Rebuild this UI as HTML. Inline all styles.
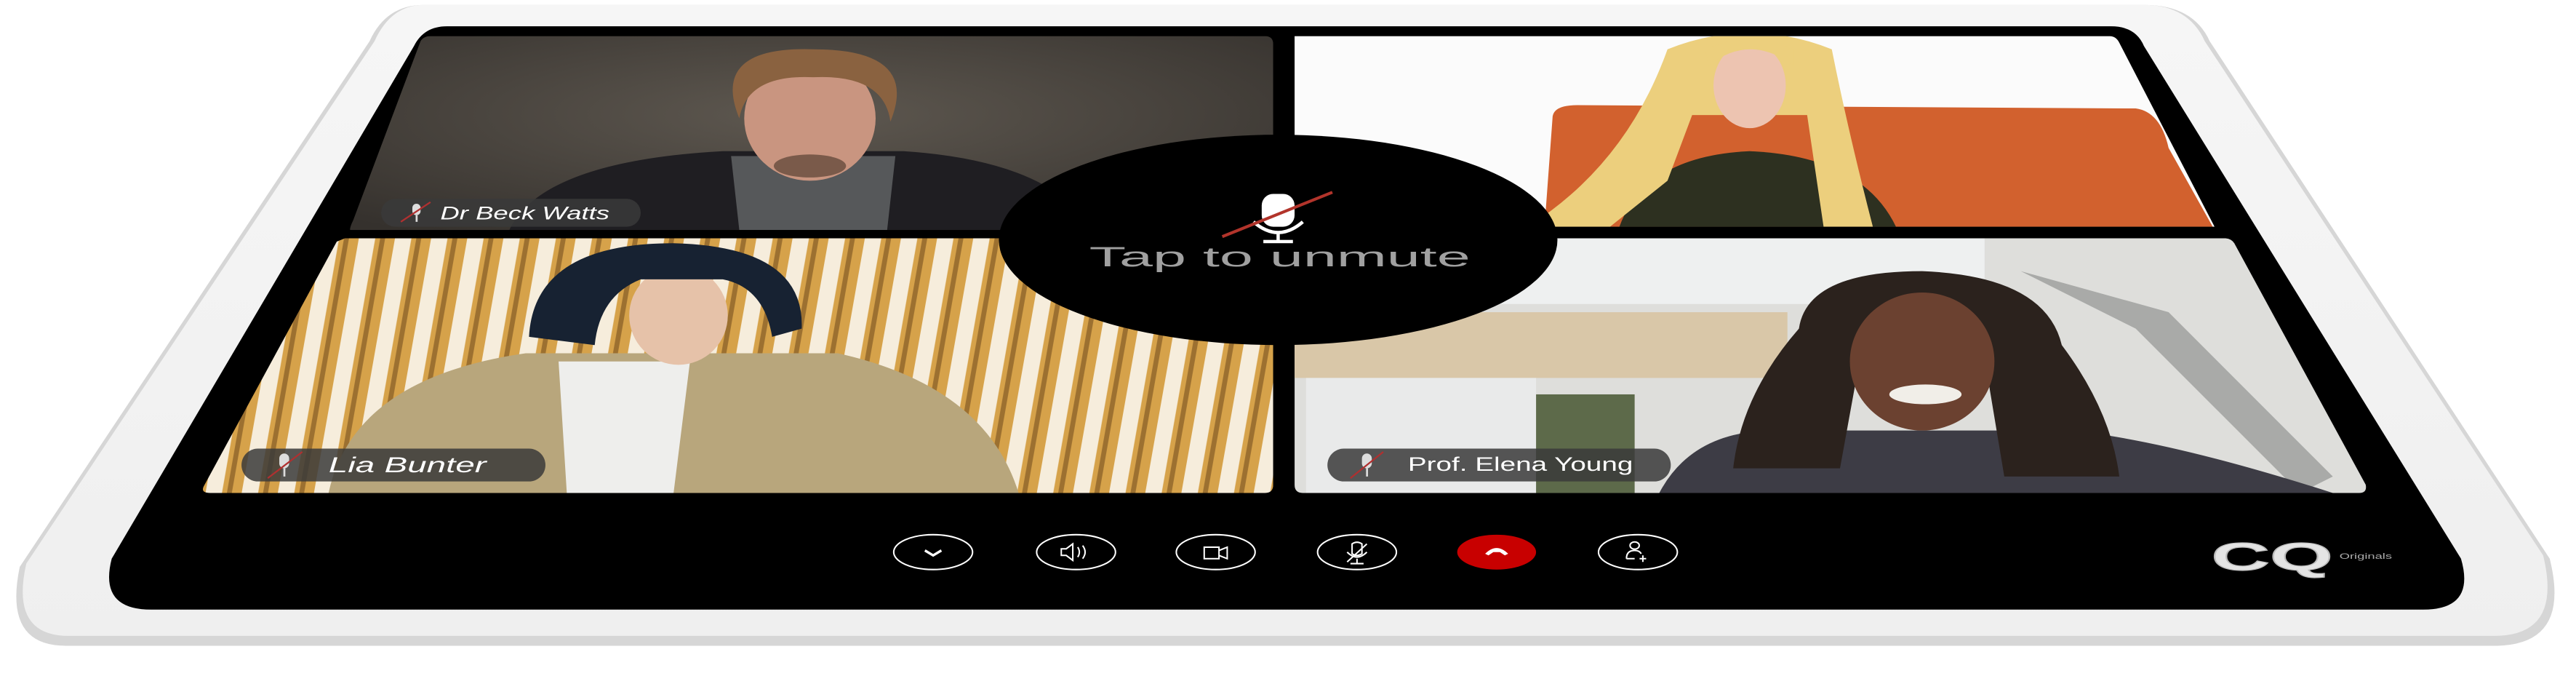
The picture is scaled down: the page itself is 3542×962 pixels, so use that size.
<!DOCTYPE html>
<html><head><meta charset="utf-8"><style>html,body{margin:0;padding:0;background:#fff;overflow:hidden}svg{display:block}</style></head>
<body>
<svg width="3542" height="962" viewBox="0 0 1568 426" preserveAspectRatio="none" xmlns="http://www.w3.org/2000/svg" font-family="Liberation Sans, sans-serif">
<defs>
<clipPath id="tl"><path d="M262,22 L770,22 Q775,22 775,27 L775,140 L213,140 Q213,138 215,134 L256,25 Q258,22 262,22Z"/></clipPath>
<clipPath id="tr"><path d="M788,22 L1284,22 Q1288,22 1290,26 L1348,138 L788,138Z"/></clipPath>
<clipPath id="bl"><path d="M210,145 L775,145 L775,295 Q775,300 770,300 L128,300 Q122,300 124,296 L205,147Z"/></clipPath>
<clipPath id="br"><path d="M788,145 L1354,145 Q1358,145 1360,148 L1440,295 Q1441,300 1436,300 L793,300 Q788,300 788,295Z"/></clipPath>
<pattern id="slats" width="22" height="200" patternUnits="userSpaceOnUse" patternTransform="skewX(-10)">
<rect width="22" height="200" fill="#d6a24a"/><rect x="2" width="10" height="200" fill="#f6eddc"/><rect x="15" width="3" height="200" fill="#9c7030"/>
</pattern>
<radialGradient id="tlbg" cx="0.5" cy="0.4" r="0.7"><stop offset="0" stop-color="#5e5850"/><stop offset="1" stop-color="#35312d"/></radialGradient>
<linearGradient id="frameSh" x1="0" y1="0" x2="0" y2="1"><stop offset="0" stop-color="#f6f6f6"/><stop offset="1" stop-color="#efefef"/></linearGradient>
</defs>
<path d="M258,3 L1305,3 Q1335,3 1345,25 L1552,340 Q1565,392 1520,393 L40,393 Q2,393 12,345 L225,25 Q235,3 258,3Z" fill="#d6d6d6"/>
<path d="M258,3 L1305,3 Q1332,3 1342,25 L1548,338 Q1560,387 1518,387 L42,387 Q6,387 16,343 L228,25 Q238,3 258,3Z" fill="url(#frameSh)"/>
<path d="M272,16 L1285,16 Q1300,16 1305,28 L1498,340 Q1507,371 1475,371 L92,371 Q60,371 68,340 L252,28 Q258,16 272,16Z" fill="#000"/>
<g clip-path="url(#tl)">
<rect x="200" y="20" width="580" height="125" fill="url(#tlbg)"/>
<path d="M310,140 Q330,98 440,92 L550,92 Q640,98 665,140Z" fill="#1f1e22"/>
<path d="M445,95 L545,95 L540,140 L450,140Z" fill="#56585a"/>
<ellipse cx="493" cy="72" rx="40" ry="38" fill="#c99580"/>
<path d="M450,72 Q432,28 495,30 Q560,30 542,74 Q538,45 495,47 Q455,45 450,72Z" fill="#8a6240"/>
<ellipse cx="493" cy="101" rx="22" ry="7" fill="#7a5a4a"/>
</g>
<g clip-path="url(#tr)">
<rect x="780" y="20" width="580" height="125" fill="#fbfbfb"/>
<path d="M945,72 Q945,64 960,64 L1300,66 Q1315,68 1320,90 L1348,140 L940,140Z" fill="#d2612e"/>
<path d="M985,140 Q1000,95 1065,92 Q1135,95 1155,140Z" fill="#2d3020"/>
<path d="M1015,30 Q1065,10 1115,30 Q1125,80 1140,138 L1110,138 L1100,70 L1030,70 L1015,110 L980,138 L930,138 Q990,100 1015,30Z" fill="#eccf7d"/>
<ellipse cx="1065" cy="52" rx="22" ry="26" fill="#edc4b1"/>
<path d="M1040,40 Q1065,20 1092,40 L1092,30 Q1065,18 1038,30Z" fill="#eccf7d"/>
</g>
<g clip-path="url(#bl)">
<rect x="110" y="140" width="680" height="165" fill="url(#slats)"/>
<path d="M200,300 Q215,230 320,215 L510,215 Q600,235 620,300Z" fill="#b8a67c"/>
<path d="M340,220 L420,220 L410,300 L345,300Z" fill="#eeeeec"/>
<ellipse cx="413" cy="192" rx="30" ry="30" fill="#e6c2a9"/>
<path d="M322,205 Q325,148 410,148 Q490,150 488,200 L470,205 Q465,175 440,170 L390,170 Q365,180 362,210 Z" fill="#172232"/>
</g>
<g clip-path="url(#br)">
<rect x="780" y="140" width="670" height="165" fill="#dededb"/>
<rect x="788" y="145" width="420" height="40" fill="#eef0f0"/>
<rect x="788" y="190" width="300" height="40" fill="#d9c7a8"/>
<rect x="795" y="230" width="140" height="70" fill="#e9eaea"/>
<rect x="935" y="240" width="60" height="60" fill="#5d6a4a"/>
<path d="M1230,165 L1320,190 L1420,290 L1400,300 L1300,200 Z" fill="#a9aaa8"/>
<path d="M1010,300 Q1030,262 1080,262 L1260,262 Q1320,268 1420,300Z" fill="#3d3c45"/>
<path d="M1095,200 Q1100,165 1170,165 Q1245,168 1255,210 Q1285,250 1290,290 L1220,290 L1210,230 L1130,230 L1120,285 L1055,285 Q1060,240 1095,200Z" fill="#2b221d"/>
<ellipse cx="1170" cy="220" rx="44" ry="42" fill="#6b4130"/>
<ellipse cx="1172" cy="240" rx="22" ry="6" fill="#f1eee8"/>
</g>
<rect x="232" y="121" width="158" height="17" rx="8.5" fill="#3a3a3a" fill-opacity="0.85"/>
<text x="268" y="133.5" font-size="11" fill="#fff" font-style="italic" textLength="103" lengthAdjust="spacingAndGlyphs">Dr Beck Watts</text>
<rect x="147" y="273" width="185" height="20" rx="10" fill="#3a3a3a" fill-opacity="0.85"/>
<text x="200" y="287.5" font-size="13" fill="#fff" font-style="italic" textLength="96" lengthAdjust="spacingAndGlyphs">Lia Bunter</text>
<rect x="808" y="273" width="209" height="20" rx="10" fill="#3a3a3a" fill-opacity="0.85"/>
<text x="857" y="286.5" font-size="12" fill="#fff" textLength="137" lengthAdjust="spacingAndGlyphs">Prof. Elena Young</text>
<g fill="#ddd">
<rect x="251" y="124" width="5" height="7" rx="2.5"/><rect x="253" y="131" width="1.2" height="4"/>
<rect x="170" y="276" width="6" height="9" rx="3"/><rect x="172.5" y="285" width="1.2" height="5"/>
<rect x="829" y="276" width="6" height="9" rx="3"/><rect x="831.5" y="285" width="1.2" height="5"/>
</g>
<g stroke="#b03030" stroke-width="1"><line x1="244" y1="135" x2="262" y2="123"/><line x1="163" y1="291" x2="184" y2="275"/><line x1="822" y1="291" x2="842" y2="275"/></g>
<ellipse cx="778" cy="146" rx="170" ry="64" fill="#000"/>
<rect x="768" y="118" width="20" height="20" rx="7" fill="#fff"/>
<path d="M763,135 Q778,148 793,135" stroke="#fff" stroke-width="2" fill="none"/>
<rect x="777" y="141" width="2" height="6" fill="#fff"/>
<rect x="769" y="146" width="18" height="2" fill="#fff"/>
<line x1="744" y1="144" x2="811" y2="117" stroke="#b2342b" stroke-width="1.8"/>
<text x="663" y="162" font-size="17" fill="#a0a0a0" textLength="232" lengthAdjust="spacingAndGlyphs">Tap to unmute</text>
<g fill="none" stroke="#fff" stroke-width="0.9">
<ellipse cx="568" cy="336" rx="24" ry="10.6"/>
<ellipse cx="655" cy="336" rx="24" ry="10.6"/>
<ellipse cx="740" cy="336" rx="24" ry="10.6"/>
<ellipse cx="826" cy="336" rx="24" ry="10.6"/>
<ellipse cx="997" cy="336" rx="24" ry="10.6"/>
<path d="M563,335 L568,338 L573,335" stroke-width="1.5"/>
<path d="M646,334 L649,334 L653,331 L653,341 L649,338 L646,338Z M656,333 Q658,336 656,339 M659,332 Q662,336 659,340"/>
<rect x="733" y="333" width="9" height="7"/><path d="M742,335 L747,333 L747,340 L742,338"/>
<path d="M823,331 Q826,329 829,331 L829,337 Q826,339 823,337Z M820,336 Q826,342 832,336 M826,340 L826,343 M822,343 L830,343 M820,342 L832,331"/>
<ellipse cx="995" cy="332" rx="2.8" ry="2.2"/><path d="M990,340 Q990,335 995,335 Q998,335 999,337 M990,340 L995,340 M1000,338 L1000,342 M998,340 L1002,340"/>
</g>
<ellipse cx="911" cy="336" rx="24" ry="10.6" fill="#c80000"/>
<path d="M904,337 Q911,330 918,337 L916,338 L913,336 L909,336 L906,338Z" fill="#fff"/>
<text x="1346" y="347" font-size="24" font-weight="bold" fill="#e4e4e4" stroke="#bbb" stroke-width="0.5" textLength="74" lengthAdjust="spacingAndGlyphs">CQ</text>
<text x="1424" y="340" font-size="5" fill="#aaa" textLength="32" lengthAdjust="spacingAndGlyphs">Originals</text>
</svg>
</body></html>
